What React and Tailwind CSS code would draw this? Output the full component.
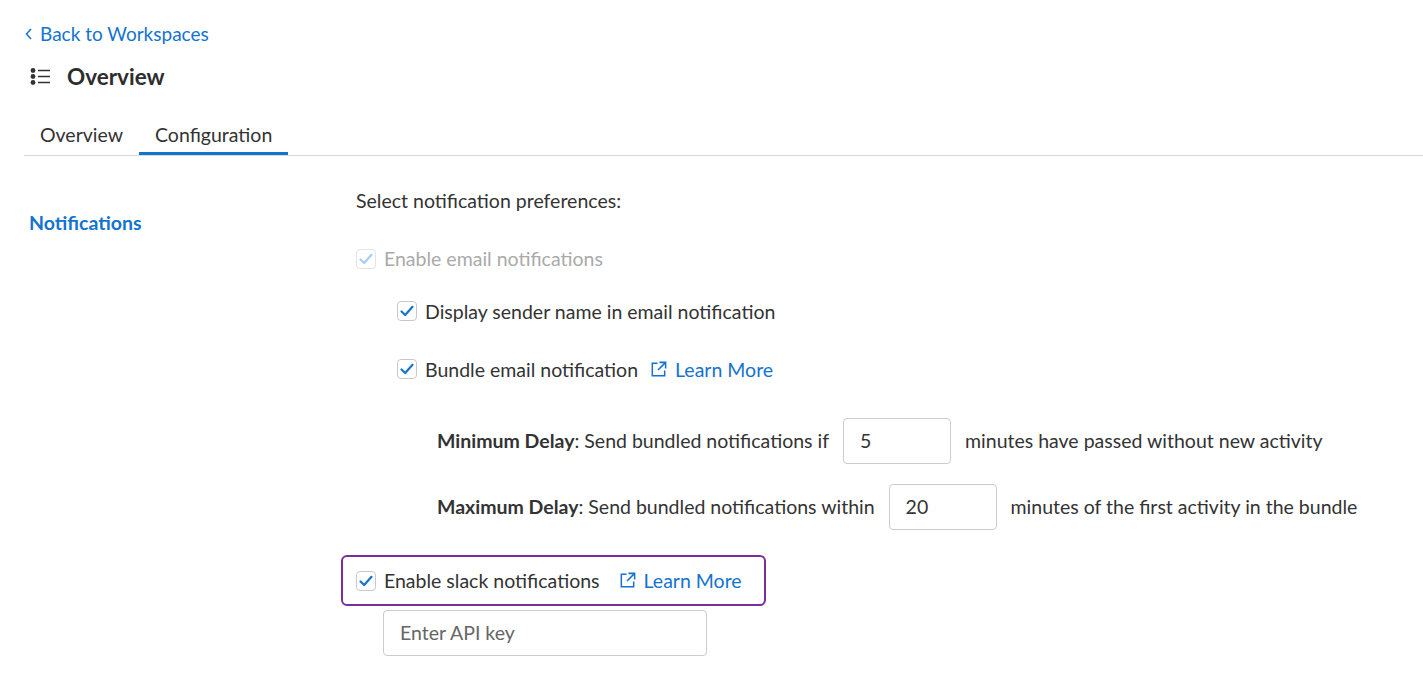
import React from "react";

const Check = ({ disabled }) => (
  <span className={`w-[20px] h-[20px] rounded-[4px] border ${disabled ? "border-[#e3e3e3]" : "border-[#c8c8c8]"} bg-white flex items-center justify-center shrink-0`}>
    <svg width="16" height="16" viewBox="0 0 16 16" fill="none">
      <path d="M2.5 8.5 L6.2 12 L13.5 3.8" stroke={disabled ? "#a9cdee" : "#1473d0"} strokeWidth="2.2" strokeLinecap="round" strokeLinejoin="round" />
    </svg>
  </span>
);

const Ext = () => (
  <svg width="19" height="19" viewBox="0 0 20 20" fill="none" stroke="#1473d0" strokeWidth="1.6">
    <path d="M9 3.5H3.5v13h13V11" />
    <path d="M11 2.5h6.5V9M17.5 2.5 9.5 10.5" />
  </svg>
);

export default function App() {
  return (
    <div className="w-[1423px] h-[678px] bg-white text-[#333] overflow-hidden" style={{ fontFamily: "Lato, 'Liberation Sans', sans-serif" }}>
      <div className="pl-[24px] pt-[21px]">
        <a className="flex items-center gap-[6px] text-[#1473d0] text-[19px] leading-[26px]">
          <svg width="10" height="14" viewBox="0 0 10 14" fill="none" stroke="#1473d0" strokeWidth="1.5"><path d="M7 2 L2.5 7 L7 12" /></svg>
          Back to Workspaces
        </a>
        <div className="flex items-center mt-[15px] h-[30px]">
          <svg width="22" height="20" viewBox="0 0 22 20" className="ml-[6px]">
            <circle cx="3" cy="3.5" r="2.4" fill="#333" /><circle cx="3" cy="9.5" r="2.4" fill="#333" /><circle cx="3" cy="15.5" r="2.4" fill="#333" />
            <path d="M8 3.5h12M8 9.5h12M8 15.5h12" stroke="#333" strokeWidth="1.6" />
          </svg>
          <span className="ml-[15px] text-[22.5px] font-bold text-[#2d2d2d]">Overview</span>
        </div>
        <div className="flex mt-[28px] border-b border-[#d8d8d8] text-[19.5px]">
          <div className="px-[16px] pb-[5px]">Overview</div>
          <div className="px-[16px] pb-[3px] border-b-[3px] border-[#1473d0]">Configuration</div>
        </div>
      </div>
      <div className="flex pl-[29px] pt-[32px] text-[19.5px]">
        <div className="w-[327px] pt-[20px] font-bold text-[#1473d0]">Notifications</div>
        <div className="flex flex-col">
          <div className="leading-[26px]">Select notification preferences:</div>
          <div className="flex items-center gap-[8px] mt-[30px] text-[#aaa]"><Check disabled />Enable email notifications</div>
          <div className="flex items-center gap-[8px] mt-[23px] ml-[41px]"><Check />Display sender name in email notification</div>
          <div className="flex items-center gap-[8px] mt-[29px] ml-[41px]"><Check />Bundle email notification<span className="ml-[3px] flex items-center gap-[7px] text-[#1473d0]"><Ext />Learn More</span></div>
          <div className="flex items-center ml-[81px] mt-[34px]">
            <span><b>Minimum Delay</b>: Send bundled notifications if</span>
            <div className="ml-[14px] w-[108px] h-[46px] border border-[#ccc] rounded-[4px] flex items-center px-[16px]">5</div>
            <span className="ml-[14px]">minutes have passed without new activity</span>
          </div>
          <div className="flex items-center ml-[81px] mt-[20px]">
            <span><b>Maximum Delay</b>: Send bundled notifications within</span>
            <div className="ml-[14px] w-[108px] h-[46px] border border-[#ccc] rounded-[4px] flex items-center px-[16px]">20</div>
            <span className="ml-[14px]">minutes of the first activity in the bundle</span>
          </div>
          <div className="self-start -ml-[15px] mt-[25px] w-[425px] h-[51px] border-2 border-[#7b2d9c] rounded-[6px] flex items-center pl-[13px] gap-[8px]">
            <Check />Enable slack notifications<span className="ml-[10px] flex items-center gap-[7px] text-[#1473d0]"><Ext />Learn More</span>
          </div>
          <div className="ml-[27px] mt-[4px] w-[324px] h-[46px] border border-[#ccc] rounded-[4px] flex items-center px-[16px] text-[#666]">Enter API key</div>
        </div>
      </div>
    </div>
  );
}
